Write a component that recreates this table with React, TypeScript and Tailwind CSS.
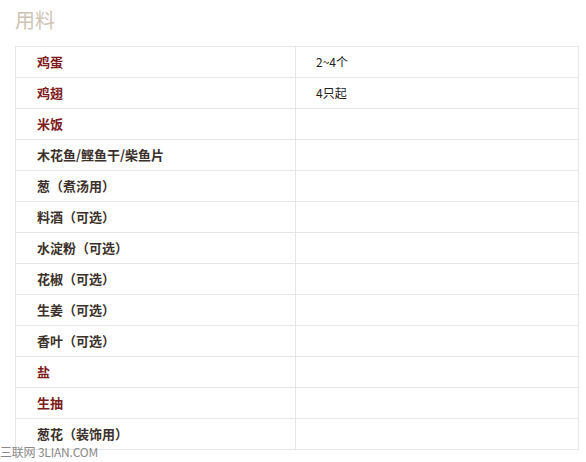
import React from "react";

const rows: { name: string; amount: string; main?: boolean }[] = [
  { name: "鸡蛋", amount: "2~4个", main: true },
  { name: "鸡翅", amount: "4只起", main: true },
  { name: "米饭", amount: "", main: true },
  { name: "木花鱼/鲣鱼干/柴鱼片", amount: "" },
  { name: "葱（煮汤用）", amount: "" },
  { name: "料酒（可选）", amount: "" },
  { name: "水淀粉（可选）", amount: "" },
  { name: "花椒（可选）", amount: "" },
  { name: "生姜（可选）", amount: "" },
  { name: "香叶（可选）", amount: "" },
  { name: "盐", amount: "", main: true },
  { name: "生抽", amount: "", main: true },
  { name: "葱花（装饰用）", amount: "" },
];

export default function App() {
  return (
    <div className="relative w-[586px] h-[462px] bg-white overflow-hidden font-['Noto_Sans_CJK_SC',sans-serif]">
      <div className="pl-[15px] pt-[7px] h-[46px]">
        <h3 className="text-[20px] leading-[26px] text-[#cdc4b6] font-normal">用料</h3>
      </div>
      <div className="ml-[15px] w-[564px] border-l border-t border-[#e6e6e6]">
        {rows.map((r, i) => (
          <div key={i} className="flex h-[31px] border-b border-[#e6e6e6]">
            <div className="w-[280px] border-r border-[#e6e6e6] pl-[21px] flex items-center">
              <span className={`text-[13px] font-bold ${r.main ? "text-[#7d1a1a]" : "text-[#3b312a]"}`}>{r.name}</span>
            </div>
            <div className="flex-1 border-r border-[#e6e6e6] pl-[20px] flex items-center">
              <span className="text-[12px] text-[#222]">{r.amount}</span>
            </div>
          </div>
        ))}
      </div>
      <div className="absolute left-0 top-[444px] text-[12px] leading-[15px] text-[#8a8a8a] tracking-[-0.2px]">三联网 3LIAN.COM</div>
    </div>
  );
}
